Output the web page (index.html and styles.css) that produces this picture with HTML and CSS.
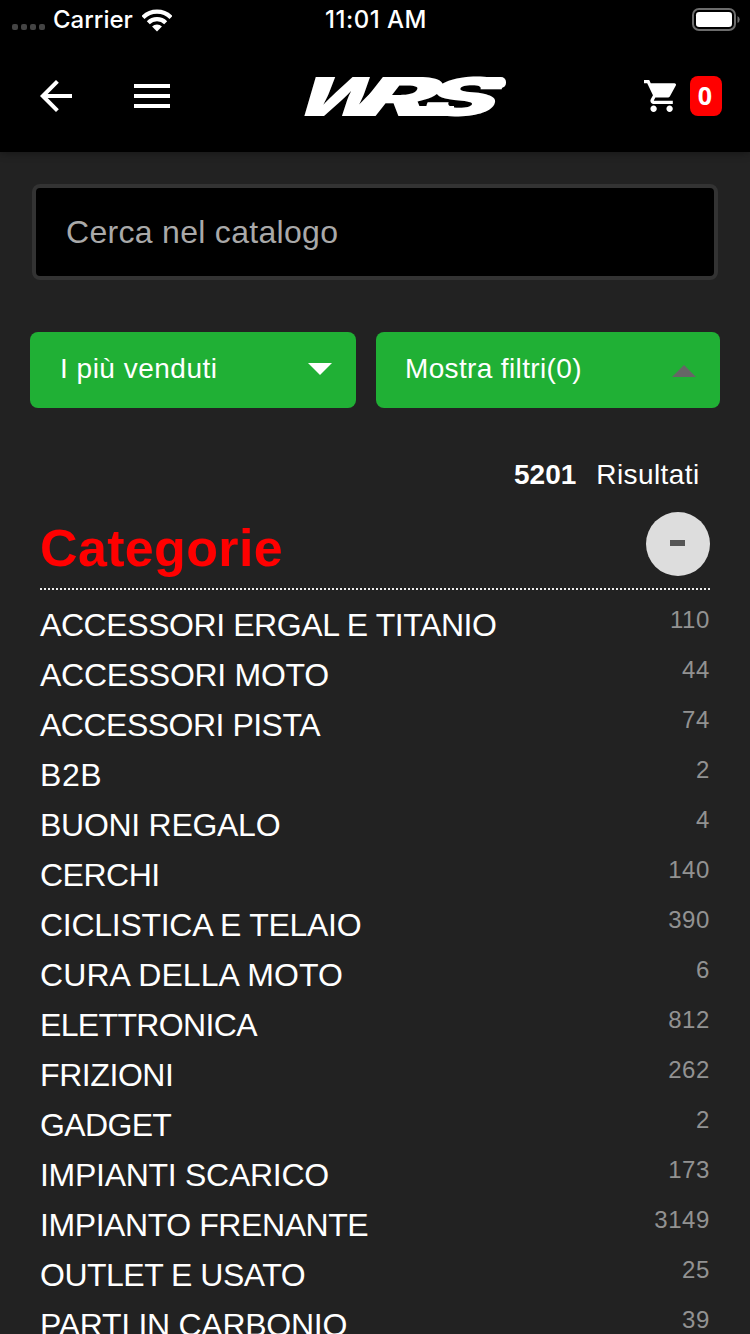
FILE: index.html
```
<!DOCTYPE html>
<html lang="it">
<head>
<meta charset="utf-8">
<title>WRS - Catalogo</title>
<link rel="stylesheet" href="styles.css">
</head>
<body>
<div class="screen">
  <header class="top">
    <div class="status">
      <div class="carrier">
        <span class="signal"><i></i><i></i><i></i><i></i></span>
        <span class="carrier-name">Carrier</span>
        <svg class="wifi" width="30" height="23" viewBox="0 0 30 23">
          <path d="M15 22.500 10.050 17.550A7 7 0 0 1 19.950 17.550Z" fill="#fff"/>
          <path d="M6.300 13.800A12.300 12.300 0 0 1 23.700 13.800M1 8.500A19.850 19.850 0 0 1 29 8.500" fill="none" stroke="#fff" stroke-width="4.200"/>
        </svg>
      </div>
      <span class="time">11:01 AM</span>
      <svg class="battery" width="48" height="24" viewBox="0 0 48 24">
        <rect x="1" y="1" width="42" height="21" rx="6" fill="none" stroke="#6c6c6c" stroke-width="2"/>
        <rect x="4" y="4" width="36" height="15" rx="3.200" fill="#fff"/>
        <path d="M45.500 8q2.200 1 2.200 3.500t-2.200 3.500z" fill="#6c6c6c"/>
      </svg>
    </div>
    <nav class="nav">
      <div class="nav-left">
        <svg width="32" height="32" viewBox="4 4 16 16" fill="none" stroke="#fff" stroke-width="2"><path d="M20 12H5.500M12.700 4.700 5.400 12l7.300 7.300"/></svg>
        <svg width="36" height="24" viewBox="3 6 18 12" fill="#fff"><path d="M3 18h18v-2H3v2zm0-5h18v-2H3v2zm0-7v2h18V6H3z"/></svg>
      </div>
      <svg class="logo" width="204" height="42" viewBox="0 0 204 42" role="img" aria-label="WRS">
        <g class="logo-text">
          <text transform="translate(-18.500 40) skewX(-36)" textLength="95" lengthAdjust="spacingAndGlyphs">W</text>
          <text transform="translate(43 40) skewX(-38)" textLength="78" lengthAdjust="spacingAndGlyphs">R</text>
          <text transform="translate(113 40) skewX(-29)" textLength="74" lengthAdjust="spacingAndGlyphs">S</text>
        </g>
        <rect x="176" y="1" width="26" height="11" rx="5" fill="#fff"/>
        <rect x="106" y="30" width="44" height="10" fill="#fff"/>
      </svg>
      <div class="cart">
        <svg width="32" height="32" viewBox="1 2 20 20" fill="#fff"><path d="M7 18c-1.100 0-1.990.9-1.990 2S5.900 22 7 22s2-.9 2-2-.9-2-2-2zM1 2v2h2l3.600 7.590-1.350 2.450c-.16.28-.25.610-.25.960 0 1.100.9 2 2 2h12v-2H7.420c-.14 0-.25-.11-.25-.25l.03-.12.9-1.630h7.450c.75 0 1.410-.41 1.750-1.030l3.580-6.490A1 1 0 0 0 20 4H5.210l-.94-2H1zm16 16c-1.100 0-1.990.9-1.990 2s.89 2 1.990 2 2-.9 2-2-.9-2-2-2z"/></svg>
        <span class="badge">0</span>
      </div>
    </nav>
  </header>
  <main class="content">
    <input class="search" type="text" placeholder="Cerca nel catalogo">
    <div class="actions">
      <button class="btn btn-sort"><span>I più venduti</span><svg width="24" height="12" viewBox="0 0 24 12"><path d="M0 0h24L12 12z" fill="#fff"/></svg></button>
      <button class="btn btn-filter"><span>Mostra filtri(0)</span><svg width="24" height="12" viewBox="0 0 24 12"><path d="M0 12h24L12 0z" fill="#666"/></svg></button>
    </div>
    <p class="results"><b>5201</b><span>Risultati</span></p>
    <section class="categories">
      <div class="cat-head"><h2>Categorie</h2><button class="toggle" aria-label="Chiudi"><span class="minus"></span></button></div>
      <ul class="list">
        <li class="snug"><span>ACCESSORI ERGAL E TITANIO</span><em>110</em></li>
        <li><span>ACCESSORI MOTO</span><em>44</em></li>
        <li class="tight"><span>ACCESSORI PISTA</span><em>74</em></li>
        <li class="wide"><span>B2B</span><em>2</em></li>
        <li><span>BUONI REGALO</span><em>4</em></li>
        <li class="tight"><span>CERCHI</span><em>140</em></li>
        <li><span>CICLISTICA E TELAIO</span><em>390</em></li>
        <li class="normal"><span>CURA DELLA MOTO</span><em>6</em></li>
        <li class="tighter"><span>ELETTRONICA</span><em>812</em></li>
        <li class="snug"><span>FRIZIONI</span><em>262</em></li>
        <li class="tighter"><span>GADGET</span><em>2</em></li>
        <li><span>IMPIANTI SCARICO</span><em>173</em></li>
        <li class="snug"><span>IMPIANTO FRENANTE</span><em>3149</em></li>
        <li class="tight"><span>OUTLET E USATO</span><em>25</em></li>
        <li><span>PARTI IN CARBONIO</span><em>39</em></li>
      </ul>
    </section>
  </main>
</div>
</body>
</html>
```
FILE: styles.css
```
* { box-sizing: border-box; }
body { margin: 0; background: #222; color: #fff; font-family: "Liberation Sans", Arial, sans-serif; }
.screen { width: 750px; height: 1334px; overflow: hidden; background: #222; }

.top { height: 152px; background: #000; box-shadow: 0 1px 8px rgba(0, 0, 0, .35); }
.status { height: 40px; display: grid; grid-template-columns: 1fr auto 1fr; align-items: center; padding: 0 10px 0 12px; font-family: Inter, sans-serif; font-size: 24px; font-weight: 450; line-height: 40px; }
.carrier { display: flex; align-items: center; }
.signal { display: flex; gap: 3px; margin: 14px 8px 0 0; }
.signal i { width: 6px; height: 6px; border-radius: 2px; background: #444; }
.carrier-name { width: 81px; white-space: nowrap; letter-spacing: 0; }
.wifi { margin-left: 8px; }
.time { letter-spacing: .5px; }
.battery { justify-self: end; }

.nav { height: 112px; display: grid; grid-template-columns: 264px 1fr auto; align-items: center; padding: 0 28px 0 40px; }
.nav-left { display: flex; align-items: center; gap: 62px; }
.logo { display: block; overflow: visible; margin-top: 1px; }
.logo-text { fill: #fff; font-family: Inter, sans-serif; font-size: 53.600px; font-weight: 900; }
.cart { display: flex; align-items: center; gap: 14px; }
.badge { width: 32px; height: 40px; border-radius: 8px; background: #f00; font: 700 25px/38px "Open Sans", sans-serif; text-align: center; padding-right: 2px; }

.content { padding: 32px 30px 0; }
.search { display: block; width: 686px; height: 96px; margin-left: 2px; padding: 0 30px; border: 4px solid #333; border-radius: 8px; background: #000; color: #fff; font: 32px "Liberation Sans", Arial, sans-serif; letter-spacing: .3px; }
.search::placeholder { color: #a9a9a9; opacity: 1; }
.actions { display: flex; gap: 20px; margin-top: 52px; }
.btn { height: 76px; display: flex; align-items: center; justify-content: space-between; border: 0; border-radius: 8px; background: #20b035; color: #fff; font: 28px/34px "Liberation Sans", Arial, sans-serif; padding: 0 24px 2px 30px; }
.btn-sort { width: 326px; letter-spacing: .5px; }
.btn-filter { width: 344px; padding-left: 29px; letter-spacing: .36px; }
.btn-filter svg { margin-top: 4px; }
.results { display: flex; justify-content: flex-end; gap: 20px; margin: 50px 20.500px 0 0; font-size: 28px; line-height: 34px; }
.results span { letter-spacing: .4px; }

.categories { padding: 0 10px; margin-top: 20px; }
.cat-head { height: 78px; display: flex; justify-content: space-between; align-items: flex-start; border-bottom: 2px dotted #eee; }
.cat-head h2 { margin: 6px 0 0; color: #f00; font-size: 52px; line-height: 60px; letter-spacing: .35px; }
.toggle { width: 64px; height: 64px; border: 0; border-radius: 50%; background: #ddd; padding: 0 1px 2px 0; display: flex; align-items: center; justify-content: center; }
.minus { width: 15px; height: 6px; background: #555; }
.list { list-style: none; margin: 10px 0 0; padding: 0; }
.list li { height: 50px; display: flex; justify-content: space-between; font-size: 32px; line-height: 50px; letter-spacing: -.28px; white-space: nowrap; }
.list .snug { letter-spacing: -.42px; }
.list .tight { letter-spacing: -.5px; }
.list .tighter { letter-spacing: -.65px; }
.list .wide { letter-spacing: .6px; }
.list .normal { letter-spacing: .08px; }
.list em { font-style: normal; font-size: 24px; line-height: 40px; letter-spacing: .6px; color: #929292; }
```
